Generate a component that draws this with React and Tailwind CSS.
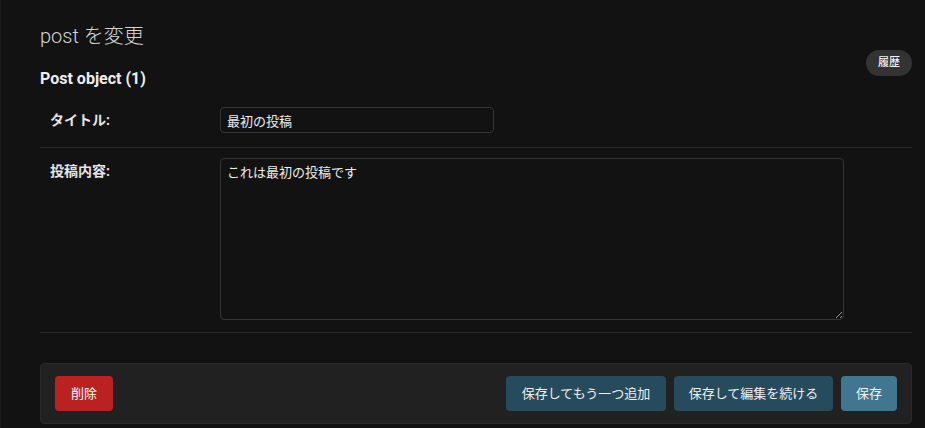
// App.jsx — Django admin change form (dark)
const font = { fontFamily: "Roboto, 'Noto Sans CJK JP', sans-serif" };

function FormRow({ label, children, last }) {
  return (
    <div
      className={
        "flex items-start px-[10px] pt-[10px] border-b border-[#2a2a2a] " +
        (last ? "pb-[12px]" : "pb-[14px]")
      }
    >
      <label className="w-[170px] shrink-0 pt-[5px] text-[14px] leading-[16px] font-bold text-[#e6e6e6]">
        {label}
      </label>
      {children}
    </div>
  );
}

export default function App() {
  return (
    <div
      className="min-h-[428px] bg-[#121212] border-l border-[#1b1b1b] pl-[39px] pr-[13px] [color-scheme:dark]"
      style={font}
    >
      <h1 className="pt-[24px] text-[20px] leading-[24px] font-light text-[#d6d6d6]">
        post を変更
      </h1>

      <div className="mt-[2px] flex items-start justify-between">
        <h2 className="mt-[19px] text-[16px] leading-[19px] font-bold text-[#eeeeee]">
          Post object (1)
        </h2>
        <a className="h-[26px] rounded-full bg-[#333333] px-[12px] text-[11px] leading-[26px] font-medium text-[#f2f2f2]">
          履歴
        </a>
      </div>

      <div className="mt-[9px]">
        <FormRow label="タイトル:">
          <input
            defaultValue="最初の投稿"
            className="h-[26px] w-[274px] rounded-[4px] border border-[#353535] bg-[#121212] px-[6px] text-[13px] text-[#eeeeee] outline-none"
          />
        </FormRow>
        <FormRow label="投稿内容:" last>
          <textarea
            defaultValue="これは最初の投稿です"
            className="block h-[162px] w-[624px] rounded-[4px] border border-[#353535] bg-[#121212] px-[6px] py-[5px] text-[13px] leading-[18px] text-[#eeeeee] outline-none"
          />
        </FormRow>
      </div>

      <div className="mt-[30px] flex items-center justify-between rounded-[4px] border border-[#2a2a2a] bg-[#212121] px-[14px] py-[12px]">
        <button className="h-[35px] rounded-[4px] bg-[#ba2121] px-[16px] text-[13px] text-white">
          削除
        </button>
        <div className="flex gap-[8px]">
          <button className="h-[35px] w-[160px] rounded-[4px] bg-[#264b5d] text-[13px] text-[#f0f0f0]">
            保存してもう一つ追加
          </button>
          <button className="h-[35px] w-[159px] rounded-[4px] bg-[#264b5d] text-[13px] text-[#f0f0f0]">
            保存して編集を続ける
          </button>
          <button className="h-[35px] w-[56px] rounded-[4px] bg-[#417690] text-[13px] text-[#f0f0f0]">
            保存
          </button>
        </div>
      </div>
    </div>
  );
}
